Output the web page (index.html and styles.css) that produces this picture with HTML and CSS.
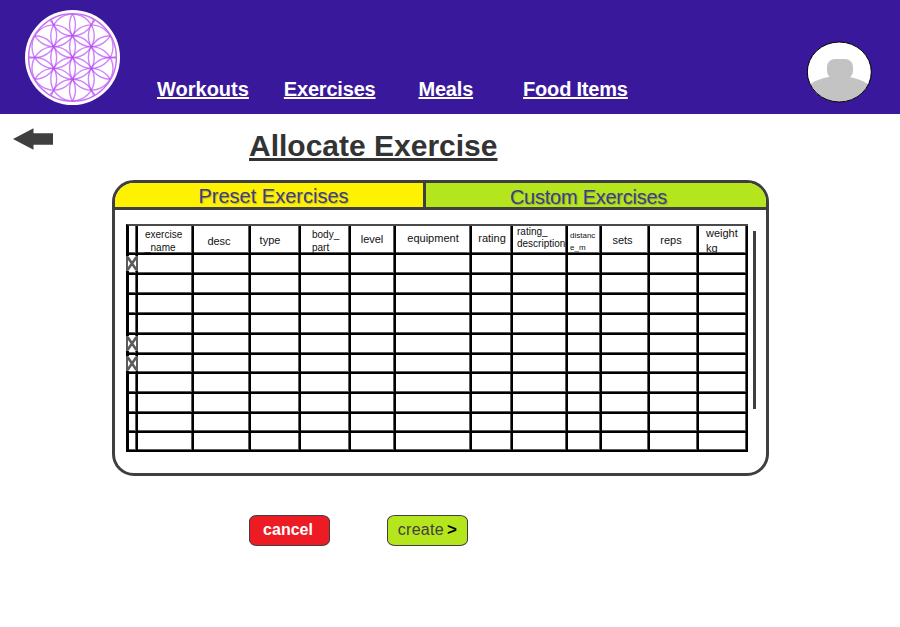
FILE: index.html
```html
<!DOCTYPE html>
<html lang="en">
<head>
<meta charset="utf-8">
<title>Allocate Exercise</title>
<link rel="stylesheet" href="styles.css">
</head>
<body>
<svg class="defs" width="0" height="0" aria-hidden="true">
  <defs>
    <symbol id="x-mark" viewBox="0 0 12 15">
      <rect width="12" height="15" fill="#fff"/>
      <path d="M1 0 V15 M11 0 V15" fill="none" stroke="#5c5c5c" stroke-width="2"/>
      <path d="M1.5 1 L10.5 14 M10.5 1 L1.5 14" fill="none" stroke="#5c5c5c" stroke-width="2.6"/>
    </symbol>
  </defs>
</svg>
<header class="topbar">
  <svg class="logo" viewBox="-47 -47 94 94" aria-hidden="true">
    <defs><clipPath id="lc"><circle r="43.5"/></clipPath></defs>
    <circle r="47" fill="#fff"/>
    <g clip-path="url(#lc)" fill="none" stroke="#b94ff5" stroke-width="1.4" stroke-opacity=".7">
      <circle cx="0" cy="0" r="21.5"/>
      <circle cx="0" cy="-21.5" r="21.5"/>
      <circle cx="0" cy="21.5" r="21.5"/>
      <circle cx="18.6" cy="-10.75" r="21.5"/>
      <circle cx="18.6" cy="10.75" r="21.5"/>
      <circle cx="-18.6" cy="-10.75" r="21.5"/>
      <circle cx="-18.6" cy="10.75" r="21.5"/>
      <circle cx="0" cy="-43" r="21.5"/>
      <circle cx="0" cy="43" r="21.5"/>
      <circle cx="18.6" cy="-32.25" r="21.5"/>
      <circle cx="18.6" cy="32.25" r="21.5"/>
      <circle cx="-18.6" cy="-32.25" r="21.5"/>
      <circle cx="-18.6" cy="32.25" r="21.5"/>
      <circle cx="37.2" cy="-21.5" r="21.5"/>
      <circle cx="37.2" cy="0" r="21.5"/>
      <circle cx="37.2" cy="21.5" r="21.5"/>
      <circle cx="-37.2" cy="-21.5" r="21.5"/>
      <circle cx="-37.2" cy="0" r="21.5"/>
      <circle cx="-37.2" cy="21.5" r="21.5"/>
    </g>
    <circle r="43.5" fill="none" stroke="#c76cf5" stroke-width="1.3"/>
  </svg>
  <nav class="nav">
    <a class="nav-link nav-workouts" href="#">Workouts</a>
    <a class="nav-link nav-exercises" href="#">Exercises</a>
    <a class="nav-link nav-meals" href="#">Meals</a>
    <a class="nav-link" href="#">Food Items</a>
  </nav>
  <svg class="avatar" viewBox="0 0 66 62" aria-hidden="true">
    <defs><clipPath id="ac"><ellipse cx="33.3" cy="31" rx="32" ry="30"/></clipPath></defs>
    <ellipse cx="33.3" cy="31" rx="32" ry="30" fill="#fff"/>
    <g clip-path="url(#ac)" fill="#c3c3c3">
      <rect x="21" y="18" width="26" height="20" rx="8"/>
      <ellipse cx="33" cy="64" rx="42" ry="29"/>
    </g>
    <ellipse cx="33.3" cy="31" rx="32" ry="30" fill="none" stroke="#000" stroke-width="1"/>
  </svg>
</header>
<main class="page">
  <div class="title-row">
    <a class="back" href="#" aria-label="Back">
      <svg class="back-icon" viewBox="0 0 41 22" aria-hidden="true">
        <path d="M0 11 L21 0 L21 5 L41 5 L41 17 L21 17 L21 22 Z" fill="#3f3f3f"/>
      </svg>
    </a>
    <h1 class="title">Allocate Exercise</h1>
  </div>
  <section class="card">
    <div class="tabs">
      <div class="tab tab-preset">Preset Exercises</div>
      <div class="tab tab-custom">Custom Exercises</div>
    </div>
    <div class="table-area">
      <div class="grid">
        <div class="cell"></div>
        <div class="cell head h-two h-name">exercise<br>_name</div>
        <div class="cell head h-desc">desc</div>
        <div class="cell head h-type">type</div>
        <div class="cell head h-two h-body">body_<br>part</div>
        <div class="cell head h-level">level</div>
        <div class="cell head h-equip">equipment</div>
        <div class="cell head h-rating">rating</div>
        <div class="cell head h-two h-ratingd">rating_<br>description</div>
        <div class="cell head h-two h-dist">distanc<br>e_m</div>
        <div class="cell head h-sets">sets</div>
        <div class="cell head h-reps">reps</div>
        <div class="cell head h-two h-weight">weight<br>kg</div>

        <div class="cell mark"><svg class="x"><use href="#x-mark"/></svg></div><div class="cell"></div><div class="cell"></div><div class="cell"></div><div class="cell"></div><div class="cell"></div><div class="cell"></div><div class="cell"></div><div class="cell"></div><div class="cell"></div><div class="cell"></div><div class="cell"></div><div class="cell"></div>
        <div class="cell tick"></div><div class="cell"></div><div class="cell"></div><div class="cell"></div><div class="cell"></div><div class="cell"></div><div class="cell"></div><div class="cell"></div><div class="cell"></div><div class="cell"></div><div class="cell"></div><div class="cell"></div><div class="cell"></div>
        <div class="cell"></div><div class="cell"></div><div class="cell"></div><div class="cell"></div><div class="cell"></div><div class="cell"></div><div class="cell"></div><div class="cell"></div><div class="cell"></div><div class="cell"></div><div class="cell"></div><div class="cell"></div><div class="cell"></div>
        <div class="cell tick"></div><div class="cell"></div><div class="cell"></div><div class="cell"></div><div class="cell"></div><div class="cell"></div><div class="cell"></div><div class="cell"></div><div class="cell"></div><div class="cell"></div><div class="cell"></div><div class="cell"></div><div class="cell"></div>
        <div class="cell mark"><svg class="x"><use href="#x-mark"/></svg></div><div class="cell"></div><div class="cell"></div><div class="cell"></div><div class="cell"></div><div class="cell"></div><div class="cell"></div><div class="cell"></div><div class="cell"></div><div class="cell"></div><div class="cell"></div><div class="cell"></div><div class="cell"></div>
        <div class="cell mark tick"><svg class="x"><use href="#x-mark"/></svg></div><div class="cell"></div><div class="cell"></div><div class="cell"></div><div class="cell"></div><div class="cell"></div><div class="cell"></div><div class="cell"></div><div class="cell"></div><div class="cell"></div><div class="cell"></div><div class="cell"></div><div class="cell"></div>
        <div class="cell"></div><div class="cell"></div><div class="cell"></div><div class="cell"></div><div class="cell"></div><div class="cell"></div><div class="cell"></div><div class="cell"></div><div class="cell"></div><div class="cell"></div><div class="cell"></div><div class="cell"></div><div class="cell"></div>
        <div class="cell tick"></div><div class="cell"></div><div class="cell"></div><div class="cell"></div><div class="cell"></div><div class="cell"></div><div class="cell"></div><div class="cell"></div><div class="cell"></div><div class="cell"></div><div class="cell"></div><div class="cell"></div><div class="cell"></div>
        <div class="cell"></div><div class="cell"></div><div class="cell"></div><div class="cell"></div><div class="cell"></div><div class="cell"></div><div class="cell"></div><div class="cell"></div><div class="cell"></div><div class="cell"></div><div class="cell"></div><div class="cell"></div><div class="cell"></div>
        <div class="cell"></div><div class="cell"></div><div class="cell"></div><div class="cell"></div><div class="cell"></div><div class="cell"></div><div class="cell"></div><div class="cell"></div><div class="cell"></div><div class="cell"></div><div class="cell"></div><div class="cell"></div><div class="cell"></div>
      </div>
      <div class="scrollbar"></div>
    </div>
  </section>
  <div class="actions">
    <button class="btn btn-cancel" type="button">cancel</button>
    <button class="btn btn-create" type="button">create<b class="chev">&gt;</b></button>
  </div>
</main>
</body>
</html>
```
FILE: styles.css
```css
* { box-sizing: border-box; }
html, body { margin: 0; padding: 0; }
body {
  width: 900px;
  height: 627px;
  overflow: hidden;
  background: #fff;
  font-family: "Liberation Sans", Arial, sans-serif;
  color: #333;
}
.defs { position: absolute; }

.topbar {
  height: 114px;
  background: #3a189b;
  display: flex;
  align-items: flex-start;
  padding-left: 25px;
}
.logo { width: 95px; height: 95px; margin-top: 10px; flex: none; }
.nav {
  display: flex;
  margin-left: 37px;
  margin-top: 78px;
  line-height: 23px;
}
.nav-link {
  color: #fff;
  font-size: 20px;
  font-weight: 700;
  text-decoration: underline;
  letter-spacing: -0.2px;
}
.nav-workouts { margin-right: 35px; letter-spacing: 0; }
.nav-exercises { margin-right: 43px; }
.nav-meals { margin-right: 50px; }
.avatar { width: 66px; height: 62px; margin-left: auto; margin-top: 41px; margin-right: 28px; flex: none; }

.title-row {
  display: flex;
  align-items: flex-start;
  height: 66px;
  padding-left: 13px;
}
.back { display: block; margin-top: 14px; height: 22px; }
.back-icon { display: block; width: 40px; height: 22px; }
.title {
  margin: 14px 0 0 196px;
  font-size: 30px;
  line-height: 36px;
  font-weight: 700;
  text-decoration: underline;
  color: #333;
}

.card {
  width: 657px;
  height: 296px;
  margin-left: 112px;
  border: 3px solid #3f3f3f;
  border-radius: 22px;
  overflow: hidden;
}
.tabs {
  display: flex;
  height: 27px;
  border-bottom: 3px solid #3f3f3f;
}
.tab {
  font-size: 20px;
  line-height: 26px;
  text-align: center;
  color: #3d3d80;
  text-shadow: 1px 1px 1px rgba(70, 70, 110, .35);
}
.tab-preset { width: 308px; background: #fff200; padding-left: 9px; }
.tab-custom {
  flex: 1;
  background: #b5e61d;
  border-left: 3px solid #3f3f3f;
  padding-right: 15px;
  letter-spacing: -0.25px;
  line-height: 28px;
}

.table-area {
  display: flex;
  align-items: flex-start;
  padding: 14px 0 0 11px;
}
.grid {
  display: grid;
  grid-template-columns: 9px 56px 57px 50px 50px 45px 76px 41px 55px 34px 48px 49px 49px;
  grid-template-rows: 29px 20px 20px 20px 20px 20px 19px 20px 20px 19px 19px;
  width: 622px;
  border-left: 3px solid #000;
  border-top: 2px solid #4a4a4a;
}
.cell {
  border-right: 2px solid #000;
  border-bottom: 2px solid #000;
  box-shadow: inset -1px -1px 0 #5a5a5a;
  min-width: 0;
  position: relative;
}
.head {
  overflow: hidden;
  color: #111;
  font-size: 11px;
  line-height: 13px;
  padding-top: 9px;
  text-align: center;
  white-space: nowrap;
}
.h-two { font-size: 10px; line-height: 13px; padding-top: 2px; text-align: left; }
.h-name { padding-left: 7px; }
.h-desc { padding-top: 9px; padding-right: 5px; }
.h-type { padding-right: 10px; padding-top: 8px; }
.h-body { padding-left: 11px; }
.h-level { padding-top: 7px; padding-right: 1px; }
.h-equip { padding-top: 6px; }
.h-rating { padding-top: 6px; padding-left: 1px; }
.h-ratingd { padding-left: 4px; padding-top: 0; line-height: 12px; }
.h-dist { font-size: 8px; padding-left: 2px; padding-top: 4px; line-height: 12px; }
.h-sets { padding-top: 8px; padding-right: 5px; }
.h-reps { padding-top: 8px; padding-right: 5px; }
.h-weight { font-size: 11px; padding-left: 7px; padding-top: 0; line-height: 15px; }

.tick::after {
  content: "";
  position: absolute;
  left: 100%;
  bottom: -2px;
  width: 5px;
  height: 2px;
  background: #000;
}
.x {
  position: absolute;
  left: -3px;
  top: 1px;
  width: 12px;
  height: 15px;
}

.scrollbar {
  width: 3px;
  height: 178px;
  margin: 7px 0 0 5px;
  background: #3f3f3f;
}

.actions {
  display: flex;
  gap: 57px;
  margin: 39px 0 0 249px;
}
.btn {
  width: 81px;
  height: 31px;
  padding: 0 0 2px;
  border: 1px solid #3f3f3f;
  border-radius: 8px / 6px;
  font-family: inherit;
  font-size: 16px;
  line-height: 27px;
}
.btn-cancel { background: #ed1c24; color: #fff; font-weight: 700; padding-right: 3px; }
.btn-create { background: #b5e61d; color: #3f3f3f; letter-spacing: .3px; }
.chev { color: #000; margin-left: 3px; font-size: 17px; }
```
